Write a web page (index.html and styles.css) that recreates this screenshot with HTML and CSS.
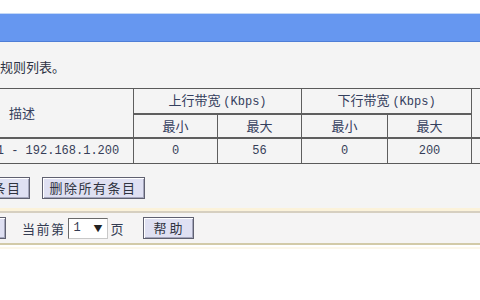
FILE: index.html
```html
<!DOCTYPE html>
<html lang="zh-CN">
<head>
    <meta charset="UTF-8">
    <title>IP带宽控制</title>
    <link rel="stylesheet" href="styles.css">
</head>
<body>
    <div class="page">
        <div class="top-gap"></div>
        <div class="title-bar"></div>

        <div class="content">
            <p class="intro">当前带宽控制规则列表。</p>

            <table class="rules">
                <colgroup>
                    <col class="col-desc">
                    <col class="col-num">
                    <col class="col-num">
                    <col class="col-num-wide">
                    <col class="col-num">
                    <col class="col-extra">
                </colgroup>
                <thead>
                    <tr>
                        <th rowspan="2">描述</th>
                        <th colspan="2">上行带宽 <span class="mono">(Kbps)</span></th>
                        <th colspan="2">下行带宽 <span class="mono">(Kbps)</span></th>
                        <th rowspan="2"></th>
                    </tr>
                    <tr>
                        <th>最小</th>
                        <th>最大</th>
                        <th>最小</th>
                        <th>最大</th>
                    </tr>
                </thead>
                <tbody>
                    <tr>
                        <td class="mono">192.168.1.1 - 192.168.1.200</td>
                        <td class="mono">0</td>
                        <td class="mono">56</td>
                        <td class="mono">0</td>
                        <td class="mono">200</td>
                        <td></td>
                    </tr>
                </tbody>
            </table>

            <div class="actions">
                <button class="btn">添加新条目</button>
                <button class="btn">删除所有条目</button>
            </div>
        </div>

        <div class="rule-line"></div>

        <div class="pager">
            <button class="btn">上一页</button>
            <button class="btn">下一页</button>
            <span class="pager-label">当前第</span>
            <span class="page-select"><span class="mono">1</span><span class="arrow">▼</span></span>
            <span class="pager-unit">页</span>
            <button class="btn btn-help">帮 助</button>
        </div>
        <div class="foot-line"></div>
    </div>
</body>
</html>
```

FILE: styles.css
```css
body {
    margin: 0;
    background: white;
    overflow: hidden;
    font-family: "Noto Sans CJK SC", "Noto Sans", sans-serif;
    font-size: 13px;
    color: #343c52;
}
.page {
    margin-left: -130px;
    width: 700px;
}
.top-gap {
    height: 13px;
    background: white;
}
.title-bar {
    height: 27px;
    background: #6697f0;
    border-top: 1px solid #c4d8f6;
    border-bottom: 1px solid #4f7ed6;
}
.content {
    background: #f4f4f4;
    padding: 15px 0 9px 0;
}
.intro {
    margin: 0 0 11px 52px;
    line-height: 20px;
    color: #2e3344;
}
.mono {
    font-family: "Liberation Mono", monospace;
    font-size: 12px;
}
.rules {
    margin-left: 40px;
    table-layout: fixed;
    width: 600px;
    border-collapse: separate;
    border-spacing: 0;
    border: 1px solid #5a5a5a;
    border-right: none;
}
.col-desc { width: 223px; }
.col-num { width: 84px; }
.col-num-wide { width: 86px; }
.col-extra { width: 39px; }
.rules th,
.rules td {
    height: 23px;
    padding: 0;
    border: 1px solid #5e5e5e;
    border-top: none;
    border-left: none;
    text-align: center;
    font-weight: normal;
    color: #35405e;
    line-height: 23px;
}
.rules th {
    border-bottom-width: 2px;
    height: 22px;
    line-height: 22px;
}
.rules td {
    border-bottom: none;
    height: 24px;
    line-height: 24px;
    color: #363e58;
}
.actions {
    display: flex;
    gap: 12px;
    margin-top: 13px;
    padding-left: 71px;
}
.btn {
    height: 22px;
    padding: 0 7px;
    font-family: "Noto Sans CJK SC", sans-serif;
    font-size: 13px;
    letter-spacing: 1.5px;
    color: #2f3340;
    background: #dfe0f2;
    border: 1px solid #5f6070;
    box-shadow: inset 1px 1px 0 #ffffff, inset -1px -1px 0 #a4a6bc;
    line-height: 18px;
}
.rule-line {
    height: 0;
    border-top: 3px solid #fbf2da;
    border-bottom: 2px solid #d6cfc0;
}
.pager {
    display: flex;
    align-items: center;
    background: #f5f4f4;
    padding: 4px 0 4px 9px;
    border-bottom: 2px solid #d2caa8;
}
.pager .btn + .btn {
    margin-left: 8px;
}
.pager-label {
    margin-left: 16px;
    letter-spacing: 1.5px;
    line-height: 21px;
}
.page-select {
    display: flex;
    align-items: center;
    justify-content: space-between;
    margin-left: 2px;
    padding: 0 4px 0 5px;
    box-sizing: border-box;
    width: 40px;
    height: 21px;
    background: white;
    border: 1px solid #6a6a6a;
    border-right-color: #c8c8c8;
    border-bottom-color: #c8c8c8;
}
.arrow {
    font-size: 9px;
    color: #222;
}
.pager-unit {
    margin-left: 3px;
    line-height: 21px;
}
.btn-help {
    margin-left: 19px;
    width: 51px;
    letter-spacing: 0;
}
.foot-line {
    height: 2px;
    margin-top: 2px;
    background: #fcf7ea;
}
```
